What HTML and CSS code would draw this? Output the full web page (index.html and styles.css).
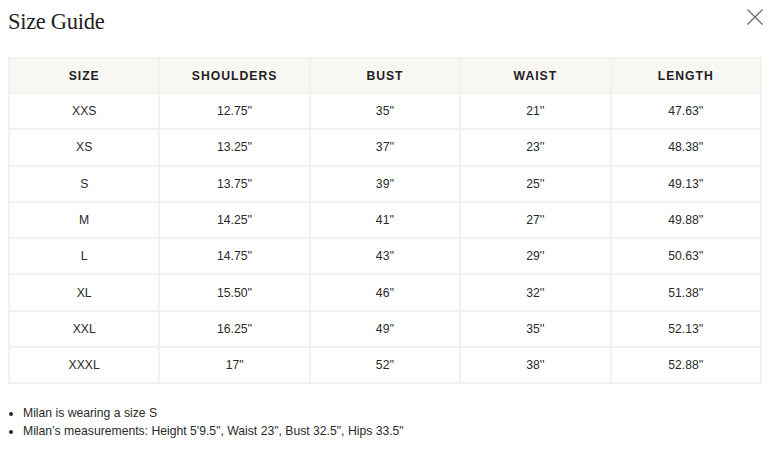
FILE: index.html
```html
<!DOCTYPE html>
<html lang="en">
<head>
<meta charset="utf-8">
<title>Size Guide</title>
<link rel="stylesheet" href="styles.css">
</head>
<body>
<div class="modal">
  <div class="head">
    <h1 class="title">Size Guide</h1>
    <button class="close" aria-label="Close">
      <svg width="18" height="18" viewBox="0 0 18 18"><path d="M1.5 1.5L16.5 16.5M16.5 1.5L1.5 16.5" stroke="#6b6b6b" stroke-width="1.3" fill="none"/></svg>
    </button>
  </div>
  <table class="sizes">
    <thead>
      <tr><th>SIZE</th><th>SHOULDERS</th><th>BUST</th><th>WAIST</th><th>LENGTH</th></tr>
    </thead>
    <tbody>
      <tr><td>XXS</td><td>12.75''</td><td>35''</td><td>21''</td><td>47.63''</td></tr>
      <tr><td>XS</td><td>13.25''</td><td>37''</td><td>23''</td><td>48.38''</td></tr>
      <tr><td>S</td><td>13.75''</td><td>39''</td><td>25''</td><td>49.13''</td></tr>
      <tr><td>M</td><td>14.25''</td><td>41''</td><td>27''</td><td>49.88''</td></tr>
      <tr><td>L</td><td>14.75''</td><td>43''</td><td>29''</td><td>50.63''</td></tr>
      <tr><td>XL</td><td>15.50''</td><td>46''</td><td>32''</td><td>51.38''</td></tr>
      <tr><td>XXL</td><td>16.25''</td><td>49''</td><td>35''</td><td>52.13''</td></tr>
      <tr><td>XXXL</td><td>17"</td><td>52''</td><td>38''</td><td>52.88''</td></tr>
    </tbody>
  </table>
  <ul class="notes">
    <li>Milan is wearing a size S</li>
    <li>Milan’s measurements: Height 5'9.5", Waist 23", Bust 32.5", Hips 33.5"</li>
  </ul>
</div>
</body>
</html>
```

FILE: styles.css
```css
html, body {
  margin: 0;
  padding: 0;
  background: #ffffff;
}
body {
  padding: 0 7px 0 8px;
  font-family: "Liberation Sans", Arial, sans-serif;
  color: #222222;
}
.head {
  display: flex;
  justify-content: space-between;
  align-items: flex-start;
  height: 57px;
}
.title {
  margin: 9px 0 0 0;
  font-family: "Liberation Serif", "Times New Roman", serif;
  font-weight: 400;
  font-size: 22.5px;
  line-height: 26px;
  color: #222222;
  letter-spacing: -0.3px;
}
.close {
  margin: 8px -2px 0 0;
  padding: 0;
  border: 0;
  background: none;
  width: 18px;
  height: 18px;
  display: block;
}
.close svg { display: block; }
.sizes {
  width: 100%;
  border-collapse: collapse;
  table-layout: fixed;
  border: 2px solid #f4f2ec;
}
.sizes th, .sizes td {
  border: 2px solid #f4f2ec;
  text-align: center;
  height: 34.3px;
  padding: 0;
  font-size: 12.2px;
}
.sizes th {
  background: #f8f7f3;
  font-weight: 700;
  letter-spacing: 1px;
  color: #222222;
  height: 33px;
}
.sizes td {
  color: #2a2a2a;
}
.notes {
  margin: 20px 0 0 0;
  padding: 0 0 0 15px;
  font-size: 12.2px;
  line-height: 18px;
  color: #2a2a2a;
}
```
